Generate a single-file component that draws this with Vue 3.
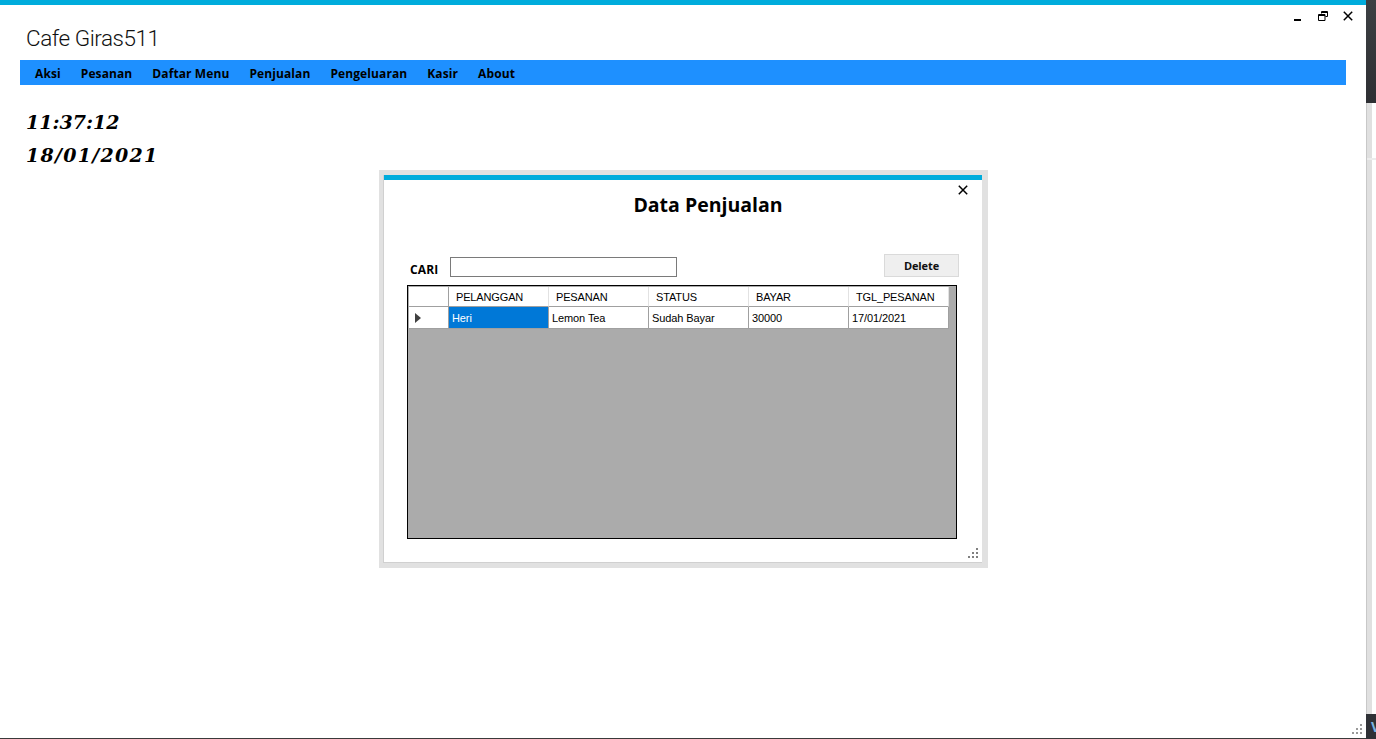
<script setup>
const menu = ['Aksi', 'Pesanan', 'Daftar Menu', 'Penjualan', 'Pengeluaran', 'Kasir', 'About']
const headers = ['PELANGGAN', 'PESANAN', 'STATUS', 'BAYAR', 'TGL_PESANAN']
const row = ['Heri', 'Lemon Tea', 'Sudah Bayar', '30000', '17/01/2021']
</script>

<template>
  <div class="screen">
    <main class="window">
      <div class="accent"></div>
      <header class="head">
        <h1 class="brand">Cafe Giras511</h1>
      </header>
      <nav class="menu">
        <span v-for="m in menu" :key="m" class="menu-item">{{ m }}</span>
      </nav>
      <div class="clock">
        <div class="hand time">11:37:12</div>
        <div class="hand date">18/01/2021</div>
      </div>

      <div class="controls">
        <svg width="10" height="10" viewBox="0 0 10 10" class="ctl-min"><rect x="1" y="8" width="7" height="2" fill="#000" /></svg>
        <svg width="10" height="10" viewBox="0 0 10 10" class="ctl-res"><path d="M3.500 2.500V.5h6v5h-2M.5 3.500h6.500v6H.5z M.5 4.500h6.500M3.500 1.500h6" fill="none" stroke="#000" stroke-width="1" /></svg>
        <svg width="10" height="10" viewBox="0 0 10 10" class="ctl-x"><path d="M.8.8l8.400 8.400M9.200.8L.8 9.200" fill="none" stroke="#000" stroke-width="1.500" /></svg>
      </div>

      <section class="dialog">
        <div class="dialog-inner">
          <div class="dialog-accent"></div>
          <svg class="dialog-x" width="10" height="10" viewBox="0 0 10 10"><path d="M.8.8l8.400 8.400M9.200.8L.8 9.200" fill="none" stroke="#000" stroke-width="1.500" /></svg>
          <h2 class="dialog-title">Data Penjualan</h2>
          <div class="tools">
            <label class="cari">CARI</label>
            <input class="search" type="text" />
            <button class="delete">Delete</button>
          </div>
          <div class="grid">
            <div class="table">
              <div class="hcell corner"></div>
              <div v-for="h in headers" :key="h" class="hcell">{{ h }}</div>
              <div class="rowhead"><i class="arrow"></i></div>
              <div v-for="(c, i) in row" :key="c" class="cell" :class="{ sel: i === 0 }">{{ c }}</div>
            </div>
          </div>
          <svg class="grip dialog-grip" width="10" height="10" viewBox="0 0 10 10"><path d="M8 0h2v2H8zM4 4h2v2H4zM8 4h2v2H8zM0 8h2v2H0zM4 8h2v2H4zM8 8h2v2H8z" fill="#808080" /></svg>
        </div>
      </section>

      <svg class="grip main-grip" width="10" height="10" viewBox="0 0 10 10"><path d="M8 0h2v2H8zM4 4h2v2H4zM8 4h2v2H8zM0 8h2v2H0zM4 8h2v2H4zM8 8h2v2H8z" fill="#9a9a9a" /></svg>
    </main>

    <aside class="strip">
      <div class="strip-top"></div>
      <div class="strip-mid"><div class="track"></div><div class="gutter"></div><div class="tick"></div></div>
      <div class="strip-bottom"><span class="v">V</span></div>
    </aside>
  </div>
</template>

<style>
html, body { margin: 0; background: #fff; overflow: hidden; }
</style>

<style scoped>
.screen {
  width: 1376px;
  height: 739px;
  display: flex;
  overflow: hidden;
  font-family: "Open Sans", "Noto Sans", sans-serif;
  color: #000;
}
.window {
  position: relative;
  width: 1366px;
  height: 739px;
  box-sizing: border-box;
  border-bottom: 1px solid #3a3a3a;
  background: #fff;
}
.accent { height: 5px; background: #00acdc; }
.head { height: 55px; padding-left: 26px; }
.brand {
  margin: 0;
  padding-top: 16px;
  font-family: Roboto, "Open Sans", sans-serif;
  font-size: 22.500px;
  line-height: 35px;
  font-weight: 300;
  color: #111;
  letter-spacing: -0.450px;
}
.menu {
  margin: 0 20px;
  height: 25px;
  background: #1e90ff;
  display: flex;
  align-items: center;
  box-sizing: border-box;
  padding: 1px 0 0 15px;
  gap: 20px;
}
.menu-item {
  font-size: 12px;
  font-weight: 700;
  color: #000;
  white-space: nowrap;
  letter-spacing: 0.1px;
}
.clock { padding: 21px 0 0 26px; }
.hand {
  font-family: "DejaVu Serif", serif;
  font-style: italic;
  font-weight: 700;
  font-size: 19px;
  line-height: 33px;
}
.time { letter-spacing: 0; }
.date { letter-spacing: 1.300px; }
.controls { position: absolute; top: 11px; left: 1293px; display: flex; }
.ctl-min { margin-right: 15px; }
.ctl-res { margin-right: 15px; }
.dialog {
  position: absolute;
  left: 379px;
  top: 170px;
  width: 609px;
  height: 398px;
  box-sizing: border-box;
  padding: 5px 6px 5px 4px;
  background: #e1e1e1;
}
.dialog-inner {
  position: relative;
  height: 100%;
  box-sizing: border-box;
  background: #fff;
  border-left: 1px solid #d0d0d0;
  border-bottom: 1px solid #d0d0d0;
}
.dialog-accent { height: 5px; background: #00acdc; }
.dialog-x { position: absolute; top: 10px; left: 574px; }
.dialog-title {
  margin: 0;
  padding: 11px 0 0 50px;
  height: 36px;
  font-size: 19.500px;
  line-height: 28px;
  font-weight: 700;
  text-align: center;
}
.tools {
  margin-top: 27px;
  height: 23px;
  display: flex;
  align-items: flex-end;
  padding-left: 26px;
}
.cari {
  width: 40px;
  font-size: 12px;
  font-weight: 700;
  line-height: 15px;
  letter-spacing: 0.1px;
}
.search {
  width: 227px;
  height: 20px;
  box-sizing: border-box;
  border: 1px solid #7a7a7a;
  background: #fff;
  padding: 0;
  margin: 0;
}
.delete {
  margin-left: 207px;
  width: 75px;
  height: 23px;
  box-sizing: border-box;
  background: #efefef;
  border: 1px solid #dadada;
  font-family: "Open Sans", sans-serif;
  font-size: 11px;
  font-weight: 700;
  color: #111;
  padding: 0;
  letter-spacing: -0.1px;
}
.grid {
  margin: 8px 0 0 23px;
  width: 550px;
  height: 254px;
  box-sizing: border-box;
  border: 1px solid #000;
  background: #ababab;
  padding: 1px;
}
.table {
  display: grid;
  grid-template-columns: 40px repeat(5, 100px);
  grid-template-rows: 20px 22px;
  width: 540px;
  font-family: "Liberation Sans", Arial, sans-serif;
  font-size: 11px;
}
.hcell {
  background: #fff;
  box-sizing: border-box;
  border-right: 1px solid #e2e2e2;
  border-bottom: 1px solid #a0a0a0;
  padding-left: 7px;
  line-height: 20px;
  white-space: nowrap;
  letter-spacing: -0.15px;
}
.hcell.corner { border-right-color: #a0a0a0; }
.rowhead {
  background: #fff;
  box-sizing: border-box;
  border-right: 1px solid #a0a0a0;
  border-bottom: 1px solid #a0a0a0;
  display: flex;
  align-items: center;
  padding-left: 6px;
}
.arrow {
  width: 0;
  height: 0;
  border-left: 6px solid #404040;
  border-top: 5px solid transparent;
  border-bottom: 5px solid transparent;
}
.cell {
  background: #fff;
  box-sizing: border-box;
  border-right: 1px solid #a0a0a0;
  border-bottom: 1px solid #a0a0a0;
  padding: 1px 0 0 3px;
  line-height: 21px;
  white-space: nowrap;
  letter-spacing: -0.1px;
}
.cell.sel { background: #0078d7; color: #fff; }
.grip { position: absolute; }
.dialog-grip { left: 584px; top: 373px; }
.main-grip { left: 1352px; top: 724px; }
.strip { width: 10px; height: 739px; display: flex; flex-direction: column; }
.strip-top { height: 103px; background: linear-gradient(#3c4043, #2e2f33); }
.strip-mid { flex: 1; display: flex; position: relative; }
.track { width: 6px; background: #e0e0e0; border-left: 1px solid #c8c8c8; box-sizing: border-box; }
.gutter { flex: 1; background: #fff; }
.tick { position: absolute; left: 1px; right: 0; top: 55px; height: 2px; background: #ececec; }
.strip-bottom {
  height: 25px;
  background: #2f3136;
  overflow: hidden;
  font-size: 14px;
  font-weight: 700;
  color: #7db4e0;
  line-height: 25px;
  padding-left: 5px;
  box-sizing: border-box;
}
</style>
